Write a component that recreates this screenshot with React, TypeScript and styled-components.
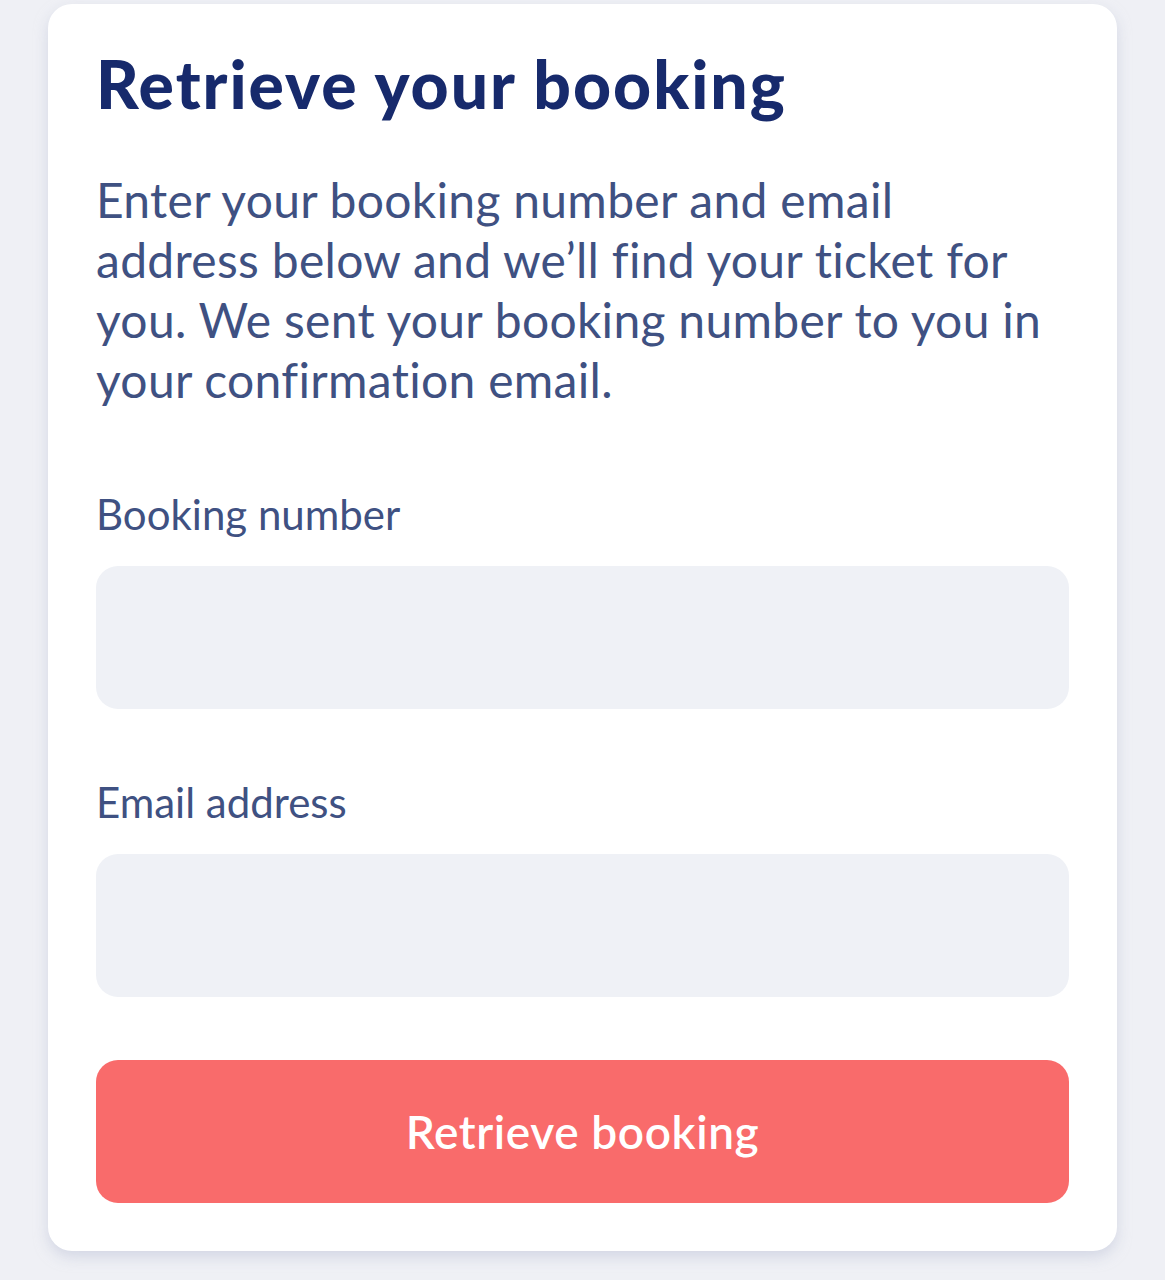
import React from "react";
import styled, { createGlobalStyle } from "styled-components";

const Global = createGlobalStyle`
  html, body { margin: 0; padding: 0; background: #eff0f5; }
  body {
    font-family: "Lato", "Noto Sans", sans-serif;
    -webkit-font-smoothing: antialiased;
    font-variant-ligatures: none;
    font-feature-settings: "liga" 0, "dlig" 0;
  }
  * { box-sizing: border-box; }
`;

const Page = styled.div`
  padding: 4px 48px 30px 48px;
  min-height: 1280px;
  background: #eff0f5;
`;

const Card = styled.form`
  width: 1069px;
  background: #ffffff;
  border-radius: 24px;
  padding: 42px 48px 48px 48px;
  display: flex;
  flex-direction: column;
  box-shadow: 0 6px 14px rgba(190, 194, 215, 0.55);
`;

const Title = styled.h1`
  margin: 0;
  font-family: "Lato", sans-serif;
  font-weight: 900;
  font-size: 66px;
  line-height: 76px;
  color: #172a6c;
  letter-spacing: 2px;
`;

const Intro = styled.p`
  margin: 48px 0 0 0;
  font-size: 48px;
  line-height: 60px;
  color: #3f5182;
  font-weight: 400;
  letter-spacing: 0.3px;
  white-space: nowrap;
`;

const Label = styled.label<{ $gap: number }>`
  margin-top: ${(p) => p.$gap}px;
  font-size: 42px;
  line-height: 46px;
  color: #3f5182;
`;

const Input = styled.input`
  margin-top: 29px;
  height: 143px;
  width: 100%;
  border: none;
  outline: none;
  border-radius: 22px;
  background: #eff1f6;
  padding: 0 32px;
  font-size: 40px;
  font-family: inherit;
  color: #172a6c;
`;

const Button = styled.button`
  margin-top: 63px;
  height: 143px;
  width: 100%;
  border: none;
  border-radius: 22px;
  background: #f96b6b;
  color: #ffffff;
  font-family: "Lato", sans-serif;
  font-weight: 600;
  font-size: 46px;
  letter-spacing: 0.6px;
  font-variant-ligatures: none;
  cursor: pointer;
`;

export default function App() {
  return (
    <Page>
      <Global />
      <Card onSubmit={(e) => e.preventDefault()}>
        <Title>Retrieve your booking</Title>
        <Intro>
          Enter your booking number and email
          <br />
          address below and we’ll find your ticket for
          <br />
          you. We sent your booking number to you in
          <br />
          your confirmation email.
        </Intro>
        <Label $gap={81} htmlFor="booking">Booking number</Label>
        <Input id="booking" type="text" />
        <Label $gap={70} htmlFor="email">Email address</Label>
        <Input id="email" type="email" />
        <Button type="submit">Retrieve booking</Button>
      </Card>
    </Page>
  );
}
